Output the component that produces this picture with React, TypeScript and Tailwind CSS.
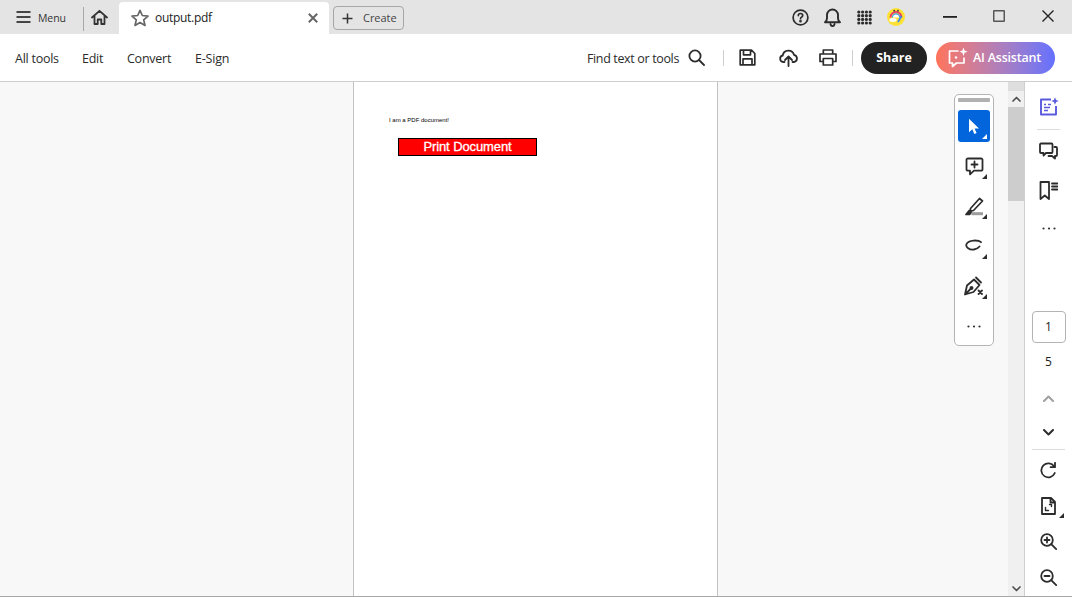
import React from "react";

const ui = { fontFamily: '"Open Sans", "Noto Sans", sans-serif' };

function Icon({ w = 20, h = 20, vb = "0 0 20 20", sw = 1.9, stroke = "#2c2c2c", className = "", children }: any) {
  return (
    <svg width={w} height={h} viewBox={vb} fill="none" stroke={stroke} strokeWidth={sw} strokeLinecap="round" strokeLinejoin="round" className={className}>
      {children}
    </svg>
  );
}

function Corner({ color = "#2c2c2c" }: { color?: string }) {
  return <span className="absolute right-[3px] bottom-[3px] w-0 h-0 border-l-[5px] border-l-transparent border-b-[5px]" style={{ borderBottomColor: color }} />;
}

function Tool({ children, active = false, corner = true }: any) {
  return (
    <div className={`relative w-8 h-8 mb-2 flex items-center justify-center rounded-[3px] ${active ? "bg-[#0265dc]" : ""}`}>
      {children}
      {corner && <Corner color={active ? "#ffffff" : "#2c2c2c"} />}
    </div>
  );
}

function Dots({ color = "#333" }: { color?: string }) {
  return (
    <svg width="14" height="3" viewBox="0 0 14 3" fill={color}>
      <circle cx="1.5" cy="1.5" r="1.1" />
      <circle cx="7" cy="1.5" r="1.1" />
      <circle cx="12.5" cy="1.5" r="1.1" />
    </svg>
  );
}

function TopBar() {
  return (
    <div className="h-[34px] bg-[#e4e4e4] flex items-stretch shrink-0">
      <div className="w-[83px] flex items-center pl-4 gap-[7px] shrink-0">
        <Icon w={15} h={14} vb="0 0 15 14" sw={1.8} stroke="#444"><path d="M0.5 2h14M0.5 7h14M0.5 12h14" strokeLinecap="butt" /></Icon>
        <span className="pt-[3px] text-[10.5px] tracking-[-0.1px] text-[#333]">Menu</span>
      </div>
      <div className="w-px h-[24px] mt-[7px] bg-[#a8a8a8]" />
      <div className="w-[35px] flex items-center justify-start pl-[7px] shrink-0">
        <Icon w={17} h={17} vb="0 0 17 17" sw={1.8} stroke="#333"><path d="M1 8.5 8.5 1.8 16 8.5M3.5 7v8h3.2v-4.5h3.6V15h3.2V7" /></Icon>
      </div>
      <div className="w-[210px] mt-[2px] bg-white rounded-t-[4px] flex items-center pl-3 pr-[11px] shrink-0">
        <svg width="18" height="18" viewBox="0 0 18 18" fill="none" stroke="#666" strokeWidth="1.7" strokeLinejoin="round"><path d="M9 1.3 11.3 6.5 17 7.1 12.7 10.8 14 16.4 9 13.5 4 16.4 5.3 10.8 1 7.1 6.7 6.5Z" /></svg>
        <span className="ml-[6px] text-[12px] tracking-[-0.3px] text-[#222] flex-1">output.pdf</span>
        <Icon w={10} h={10} vb="0 0 10 10" sw={2} stroke="#666"><path d="M0.8 0.8 9.2 9.2M9.2 0.8 0.8 9.2" strokeLinecap="butt" /></Icon>
      </div>
      <div className="ml-1 mt-[6px] w-[71px] h-[24px] border border-[#a6a6a6] rounded-[4px] flex items-center pl-2 shrink-0">
        <Icon w={11} h={11} vb="0 0 11 11" sw={1.5} stroke="#333"><path d="M5.5 0.5v10M0.5 5.5h10" strokeLinecap="butt" /></Icon>
        <span className="ml-[10px] text-[11px] tracking-[-0.05px] text-[#444]">Create</span>
      </div>
      <div className="flex-1" />
      <div className="flex items-center">
        <div className="w-8 flex justify-center">
          <svg width="17" height="17" viewBox="0 0 17 17" fill="none" stroke="#2c2c2c" strokeWidth="1.7" strokeLinecap="round">
            <circle cx="8.5" cy="8.5" r="7.4" />
            <path d="M6.3 6.6c0-1.3 1-2.1 2.2-2.1s2.2.8 2.2 2c0 1.6-2.2 1.6-2.2 3.2" />
            <circle cx="8.5" cy="12.2" r=".5" fill="#2c2c2c" />
          </svg>
        </div>
        <div className="w-8 flex justify-center">
          <Icon w={17} h={19} vb="0 0 17 19" sw={1.9}><path d="M1 14.2c1.4-1 2-2 2-4V7a5.5 5.5 0 0 1 11 0v3.2c0 2 .6 3 2 4ZM6.5 16.2c.3 1.3 1 1.9 2 1.9s1.7-.6 2-1.9" /></Icon>
        </div>
        <div className="w-8 flex justify-center">
          <svg width="15" height="15" viewBox="0 0 15 15" fill="#2c2c2c">
            {[2, 5.7, 9.4, 13].map((y) => [1.8, 5.6, 9.4, 13.2].map((x) => <circle key={`${x}-${y}`} cx={x} cy={y} r="1.6" />))}
          </svg>
        </div>
        <div className="w-8 flex justify-center">
          <svg width="18" height="18" viewBox="0 0 18 18">
            <circle cx="9" cy="9" r="9" fill="#ffe135" />
            <path d="M3.4 9.5a5.6 5.6 0 0 1 11.2 0" fill="none" stroke="#e8336b" strokeWidth="1.7" />
            <path d="M5.4 9.5a3.6 3.6 0 0 1 7.2 0" fill="#fff" stroke="#3aa0e8" strokeWidth="1.2" />
            <ellipse cx="6" cy="12" rx="3.6" ry="1.9" fill="#fff" />
            <path d="M14.5 8 11 14" stroke="#3f86f0" strokeWidth="1.8" />
            <circle cx="7.2" cy="2.6" r=".9" fill="#333" />
            <circle cx="11" cy="2.6" r=".9" fill="#333" />
          </svg>
        </div>
        <div className="w-[49px] ml-[13px] flex justify-center">
          <svg width="14" height="2" viewBox="0 0 14 2"><rect width="14" height="1.8" fill="#222" /></svg>
        </div>
        <div className="w-[49px] flex justify-center -translate-y-[1px]">
          <svg width="12" height="12" viewBox="0 0 12 12" fill="none" stroke="#555" strokeWidth="1.5"><rect x=".7" y=".7" width="10.6" height="10.6" rx=".8" /></svg>
        </div>
        <div className="w-[49px] flex justify-center -translate-y-[1px]">
          <Icon w={12} h={12} vb="0 0 12 12" sw={1.4} stroke="#222"><path d="M.5.5l11 11M11.5.5l-11 11" strokeLinecap="butt" /></Icon>
        </div>
      </div>
    </div>
  );
}

function ToolBar() {
  return (
    <div className="h-[48px] bg-white border-b border-[#cfcfcf] flex items-center pl-[15px] shrink-0 text-[#2c2c2c]">
      <span className="pt-[3px] text-[12.5px] tracking-[-0.25px] w-[67px]">All tools</span>
      <span className="pt-[3px] text-[12.5px] tracking-[-0.25px] w-[45px]">Edit</span>
      <span className="pt-[3px] text-[12.5px] tracking-[-0.25px] w-[68px]">Convert</span>
      <span className="pt-[3px] text-[12.5px] tracking-[-0.2px] w-[60px]">E-Sign</span>
      <div className="flex-1" />
      <span className="pt-[3px] text-[12.5px] tracking-[-0.35px]">Find text or tools</span>
      <div className="ml-[9px]">
        <Icon w={17} h={17} vb="0 0 17 17" sw={1.8}><circle cx="7" cy="7" r="5.6" /><path d="M11 11l5 5" /></Icon>
      </div>
      <div className="w-px h-4 bg-[#cfcfcf] ml-[18px]" />
      <div className="ml-4 -translate-x-[1px]">
        <Icon w={17} h={17} vb="0 0 17 17" sw={1.7}><path d="M1.2 1.2h11.3l3.3 3.3v11.3H1.2ZM4.5 1.4v4.4h7V1.4M4 15.6V9.8h9v5.8" /></Icon>
      </div>
      <div className="ml-[22px]">
        <Icon w={19} h={18} vb="0 0 19 18" sw={1.8}><path d="M5.5 13H4.2a3.3 3.3 0 0 1-.5-6.5A5.8 5.8 0 0 1 15 5.8a3.7 3.7 0 0 1 .2 7.2h-1.7M9.5 17V8M6 11l3.5-3.5L13 11" /></Icon>
      </div>
      <div className="ml-[21px]">
        <Icon w={18} h={17} vb="0 0 18 17" sw={1.7}><path d="M4.3 5V1h9.4v4M4 12.5H1V5h16v7.5h-3M4.3 9.5h9.4V16H4.3Z" /></Icon>
      </div>
      <div className="w-px h-4 bg-[#cfcfcf] ml-[15px]" />
      <div className="ml-2 w-[66px] h-8 rounded-full bg-[#222222] text-white text-[12.5px] font-bold flex items-center justify-center pt-[2px]">Share</div>
      <div className="ml-[9px] mr-[17px] w-[119px] h-8 rounded-full bg-gradient-to-r from-[#ff7358] to-[#6470ff] text-white text-[12.5px] font-semibold flex items-center pl-3">
        <svg width="20" height="21" viewBox="0 0 20 21" fill="none" stroke="#fff" strokeWidth="1.7" strokeLinejoin="round">
          <path d="M10.5 4H1.5v12h3v3.5l4-3.5H16v-5.5" />
          <circle cx="8" cy="10.5" r="1.2" fill="#fff" stroke="none" />
          <path d="M15.5 .5l1.1 3.1 3.1 1.1-3.1 1.1-1.1 3.1-1.1-3.1-3.1-1.1 3.1-1.1Z" fill="#fff" stroke="none" />
        </svg>
        <span className="ml-[5px] pt-[2px] tracking-[-0.2px]">AI Assistant</span>
      </div>
    </div>
  );
}

function FloatingTools() {
  return (
    <div className="absolute left-[954px] top-[12px] w-10 h-[252px] bg-white border border-[#b4b4b4] rounded-[5px] flex flex-col items-center pt-[3px]">
      <div className="w-8 h-[4px] bg-[#b1b1b1] rounded-[1px] mb-2" />
      <Tool active>
        <svg width="12" height="17" viewBox="0 0 12 17" fill="#fff"><path d="M1 0.8v13.5l3.3-3 2 4.8 2.3-1-2-4.6h4.4Z" /></svg>
      </Tool>
      <Tool>
        <Icon w={19} h={19} vb="0 0 19 19" sw={1.8}><path d="M2.5 1.5h14a1.5 1.5 0 0 1 1 1v10a1.5 1.5 0 0 1-1 1.2H9l-4 3.6v-3.6H2.5a1.5 1.5 0 0 1-1-1.2v-10a1.5 1.5 0 0 1 1-1ZM9.5 4.5v6M6.5 7.5h6" /></Icon>
      </Tool>
      <Tool>
        <svg width="19" height="19" viewBox="0 0 19 19" fill="none" stroke="#2c2c2c" strokeWidth="1.7" strokeLinejoin="round">
          <path d="M5.5 11.5 14.5 1.5 17.5 4 8.5 13.5l-3.2.6Z" />
          <path d="M1 17.5 4.2 13.5 6.5 15.5 4.5 17.5Z" fill="#2c2c2c" />
          <rect x="6.5" y="15.2" width="11.5" height="3" fill="#9c9c9c" stroke="none" />
        </svg>
      </Tool>
      <Tool>
        <Icon w={18} h={14} vb="0 0 18 14" sw={1.8}><path d="M16 3.2C13.5 .8 3.5 .6 1.5 5c-1.2 3 3 6.5 7.5 5.5 2.5-.5 4.5-1.8 5.5-3" /></Icon>
      </Tool>
      <Tool>
        <svg width="20" height="20" viewBox="0 0 20 20" fill="none" stroke="#2c2c2c" strokeWidth="1.8" strokeLinejoin="round" strokeLinecap="round">
          <path d="M1 18.5 3 9.5 10 3.5 15.5 9 9.5 16ZM1.5 18 7 12.5M12 1.5 17 6.5" />
          <circle cx="7.5" cy="12" r="1.1" fill="#2c2c2c" />
          <path d="M14.5 14.5l3.5 3.5M18 14.5 14.5 18" />
        </svg>
      </Tool>
      <div className="h-8 flex items-center justify-center"><Dots /></div>
    </div>
  );
}

function Scrollbar() {
  return (
    <div className="w-4 bg-[#f0f0f0] flex flex-col items-center shrink-0">
      <div className="w-full h-[9px] bg-[#dedede]" />
      <div className="h-4 flex items-center">
        <Icon w={9} h={6} vb="0 0 9 6" sw={1.7} stroke="#505050"><path d="M1 5 4.5 1.5 8 5" /></Icon>
      </div>
      <div className="w-full h-[94px] bg-[#cdcdcd]" />
      <div className="flex-1" />
      <div className="h-[15px] flex items-center">
        <Icon w={9} h={6} vb="0 0 9 6" sw={1.7} stroke="#505050"><path d="M1 1l3.5 3.5L8 1" /></Icon>
      </div>
    </div>
  );
}

function Row({ h, children, relative = false }: any) {
  return <div className={`flex items-center justify-center shrink-0 w-full ${relative ? "relative" : ""}`} style={{ height: h }}>{children}</div>;
}

function RightRail() {
  return (
    <div className="w-[48px] bg-white border-l border-[#cfcfcf] flex flex-col items-center shrink-0 pt-[13px]">
      <Row h={24}>
        <svg width="20" height="20" viewBox="0 0 20 20" fill="none" stroke="#5a5adf" strokeWidth="1.9" strokeLinejoin="round">
          <path d="M12 2.5H2v15h15V9" />
          <path d="M5 7.5h2M9 7.5h3M5 10.5h6M5 13.5h4" strokeWidth="1.6" />
          <path d="M16 .2l1.1 2.7 2.7 1.1-2.7 1.1-1.1 2.7-1.1-2.7-2.7-1.1 2.7-1.1Z" fill="#5a5adf" stroke="none" />
        </svg>
      </Row>
      <div className="w-[23px] h-px bg-[#dcdcdc] mt-[10px] mb-[8px] shrink-0" />
      <Row h={26}>
        <Icon w={19} h={19} vb="0 0 19 19" sw={1.8}><path d="M2 1.5h10.5a1 1 0 0 1 1 1v7.5a1 1 0 0 1-1 1H7l-2.5 2.5V11H2a1 1 0 0 1-1-1V2.5a1 1 0 0 1 1-1ZM15.5 5H17a1 1 0 0 1 1 1v7a1 1 0 0 1-1 1h-1v2.5L13 14H9.5" /></Icon>
      </Row>
      <div className="h-[13px] shrink-0" />
      <Row h={26}>
        <Icon w={19} h={19} vb="0 0 19 19" sw={1.8}><path d="M1.5 1h8.5v17l-4.2-3.5L1.5 18ZM13 2.5h5.5M13 5.5h5.5M13 8.5h5.5" /></Icon>
      </Row>
      <div className="h-[12px] shrink-0" />
      <Row h={26}><Dots /></Row>
      <div className="h-[70px] shrink-0" />
      <div className="w-[34px] h-8 border border-[#b4b4b4] rounded-[4px] flex items-center justify-center text-[12px] text-[#222] shrink-0">1</div>
      <Row h={38}><span className="text-[12px] text-[#222]">5</span></Row>
      <Row h={34}>
        <Icon w={11} h={7} vb="0 0 11 7" sw={2} stroke="#a0a0a0"><path d="M1 6l4.5-4.5L10 6" /></Icon>
      </Row>
      <Row h={34}>
        <Icon w={11} h={7} vb="0 0 11 7" sw={2} stroke="#2c2c2c"><path d="M1 1l4.5 4.5L10 1" /></Icon>
      </Row>
      <div className="w-[33px] h-px bg-[#dcdcdc] shrink-0" />
      <div className="mt-[3px] w-full flex flex-col items-center">
        <Row h={35}>
          <Icon w={17} h={17} vb="0 0 17 17" sw={1.8}><path d="M14.8 11a7 7 0 1 1-.6-6.5M15 .8v4.4h-4.4" /></Icon>
        </Row>
        <Row h={35} relative>
          <Icon w={15} h={18} vb="0 0 15 18" sw={1.8}><path d="M1 1h9l4 4v12H1ZM9.5 1v4.5H14" /><path d="M4.5 10.5v3h3M10.5 9.5v-2h-2" strokeWidth="1.4" /></Icon>
          <span className="absolute right-[8px] bottom-[5px] w-0 h-0 border-l-[5px] border-l-transparent border-b-[5px] border-b-[#2c2c2c]" />
        </Row>
        <Row h={36}>
          <Icon w={17} h={17} vb="0 0 17 17" sw={1.8}><circle cx="7" cy="7" r="5.8" /><path d="M11.2 11.2l5 5M7 4.5v5M4.5 7h5" /></Icon>
        </Row>
        <Row h={36}>
          <Icon w={17} h={17} vb="0 0 17 17" sw={1.8}><circle cx="7" cy="7" r="5.8" /><path d="M11.2 11.2l5 5M4.5 7h5" /></Icon>
        </Row>
      </div>
    </div>
  );
}

function Viewer() {
  return (
    <div className="flex-1 bg-[#f8f8f8] relative min-w-0 overflow-hidden">
      <div className="ml-[353px] w-[365px] h-full bg-white border-x border-[#c2c2c2] pt-[35px]">
        <p className="ml-[35px] text-[6px] leading-[7px] text-black" style={{ fontFamily: '"Liberation Sans", Arial, sans-serif' }}>I am a PDF document!</p>
        <div className="ml-[44px] mt-[14px] w-[139px] h-[18px] bg-[#ff0000] border border-black flex items-center justify-center pb-[2px] text-white text-[13px] tracking-[-0.1px] leading-none [-webkit-text-stroke:0.3px_white]" style={{ fontFamily: '"Liberation Sans", Arial, sans-serif' }}>Print Document</div>
      </div>
      <FloatingTools />
    </div>
  );
}

export default function App() {
  return (
    <div className="w-[1072px] h-[597px] flex flex-col overflow-hidden bg-white" style={ui}>
      <TopBar />
      <ToolBar />
      <div className="flex-1 flex min-h-0 border-b border-[#a8a8a8]">
        <Viewer />
        <Scrollbar />
        <RightRail />
      </div>
    </div>
  );
}
